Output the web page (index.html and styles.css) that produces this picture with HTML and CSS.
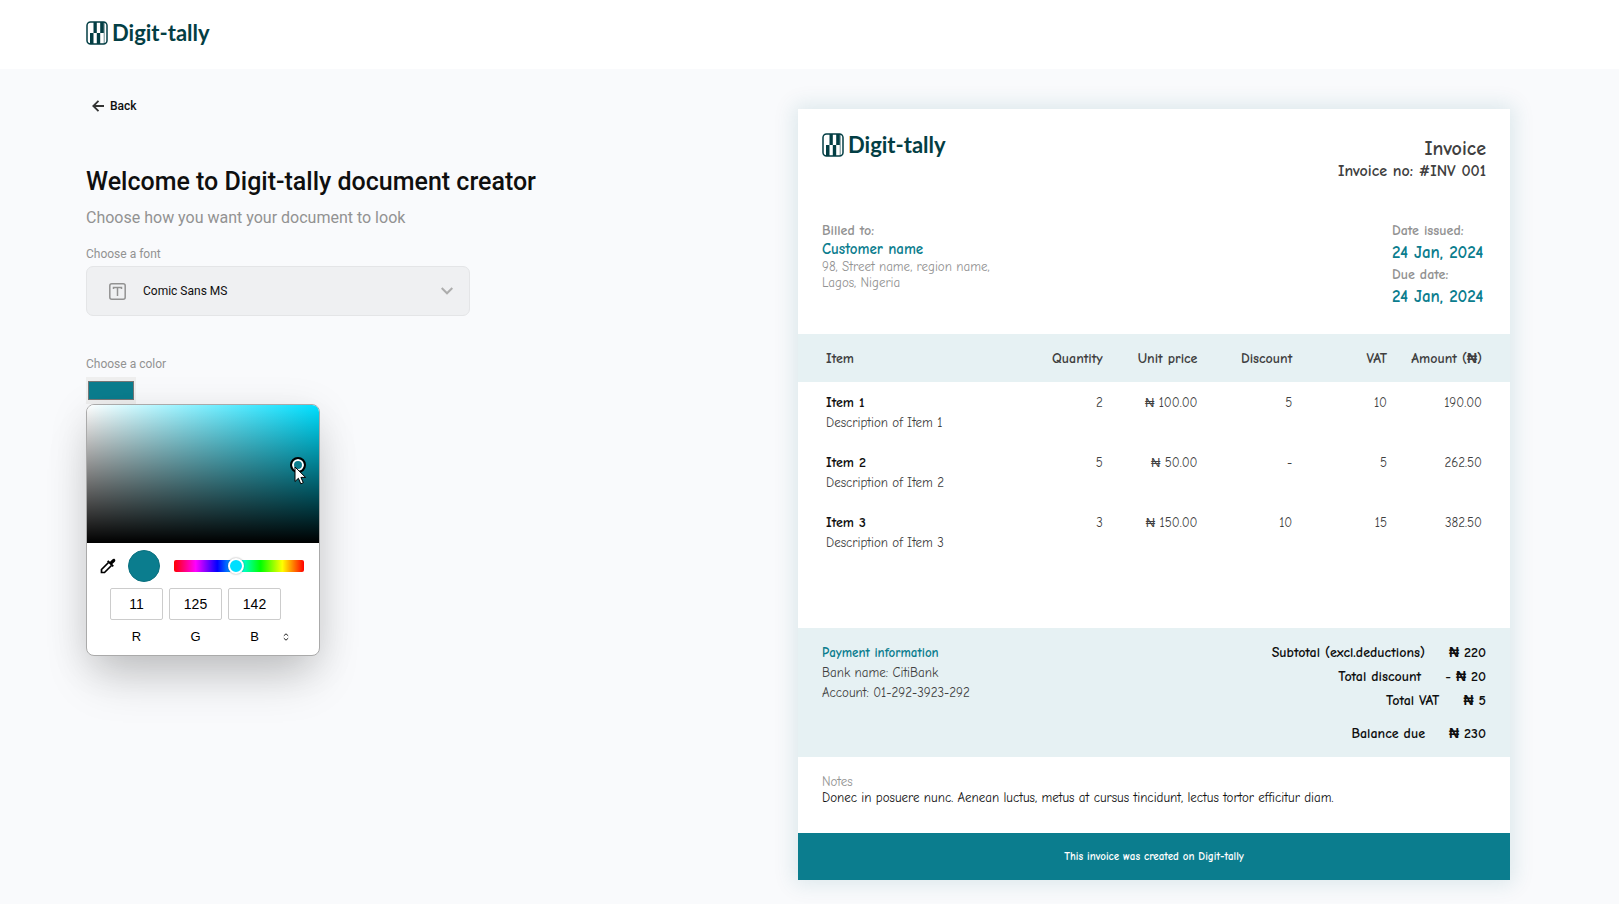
FILE: index.html
```html
<!DOCTYPE html>
<html lang="en">
<head>
<meta charset="utf-8">
<meta name="viewport" content="width=device-width, initial-scale=1">
<title>Digit-tally document creator</title>
<link rel="stylesheet" href="styles.css">
</head>
<body>
<svg width="0" height="0" class="defs" aria-hidden="true">
  <defs>
    <symbol id="logo-mark" viewBox="0 0 22 24">
      <rect x="1" y="1" width="20" height="22" rx="3.5" fill="#fff" stroke="#033e44" stroke-width="1.500"/>
      <path d="M7.500 1h3.300v11H7.500zM14.200 1h3.600v11h-3.600zM4 12h3.500v11H4zM10.800 12h3.400v11h-3.400z" fill="#033e44"/>
      <path d="M18.200 1v22" stroke="#033e44" stroke-width=".6" fill="none"/>
    </symbol>
  </defs>
</svg>

<header class="topbar">
  <a class="logo" href="#"><svg class="logo-mark" aria-hidden="true"><use href="#logo-mark"/></svg><span class="logo-text">Digit-tally</span></a>
</header>

<main class="page">
  <section class="editor">
    <button class="back" type="button">
      <svg width="12" height="12" viewBox="0 0 12 12" fill="none" stroke="#333" stroke-width="1.8" aria-hidden="true"><path d="M12 6H1.500M6.500 .8 1.300 6l5.200 5.200"/></svg>
      Back
    </button>
    <h1 class="title">Welcome to Digit-tally document creator</h1>
    <p class="subtitle">Choose how you want your document to look</p>

    <label class="label" for="font">Choose a font</label>
    <div class="select-box">
      <svg class="type-icon" width="17" height="17" viewBox="0 0 17 17" fill="none" stroke="#929292" stroke-width="1.500" aria-hidden="true"><rect x=".8" y=".8" width="15.400" height="15.400" rx="2"/><path d="M4.500 6V4.500h8V6M8.500 4.500v8.500"/></svg>
      <select class="select" id="font"><option>Comic Sans MS</option></select>
      <svg class="chevron" width="12" height="8" viewBox="0 0 12 8" fill="none" stroke="#adadad" stroke-width="2" aria-hidden="true"><path d="M.7 1 6 6.300 11.300 1"/></svg>
    </div>

    <label class="label" for="color">Choose a color</label>
    <div class="color-field">
      <input class="swatch" id="color" type="color" value="#0b7d8e">
      <button class="apply" type="button" aria-label="Continue"></button>
      <div class="picker">
        <div class="shade">
          <span class="shade-thumb"></span>
          <svg class="cursor" width="13" height="19" viewBox="0 0 13 19" aria-hidden="true"><path d="M1 1v14.500l3.400-3.200 2.400 5.500 2.500-1.100-2.400-5.300h4.700z" fill="#fff" stroke="#000"/></svg>
        </div>
        <div class="picker-row">
          <button class="dropper" type="button" aria-label="Pick a color from the screen">
            <svg width="16" height="16" viewBox="0 0 16 16" aria-hidden="true"><path d="M8.500 4.500 1.500 11.500V14.500h3l7-7" fill="none" stroke="#000" stroke-width="1.700"/><path d="m7 3.500 1.300-1.300 1.700 1.600 2.300-2.400c2-1.700 4 .5 2.500 2.300L12.300 6l1.600 1.700L12.600 9z"/></svg>
          </button>
          <span class="current"></span>
          <input class="hue" type="range" min="0" max="360" value="171" aria-label="Hue">
        </div>
        <div class="channels">
          <label class="channel"><input class="channel-input" type="text" value="11"><span>R</span></label>
          <label class="channel"><input class="channel-input" type="text" value="125"><span>G</span></label>
          <label class="channel"><input class="channel-input" type="text" value="142"><span>B</span></label>
          <button class="mode" type="button" aria-label="Change format">
            <svg width="6" height="8" viewBox="0 0 6 8" fill="none" stroke="#222" aria-hidden="true"><path d="M.8 2.800 3 .8l2.200 2M.8 5.200 3 7.200l2.200-2"/></svg>
          </button>
        </div>
      </div>
    </div>
  </section>

  <article class="invoice">
    <header class="inv-head">
      <div class="logo"><svg class="logo-mark" aria-hidden="true"><use href="#logo-mark"/></svg><span class="logo-text">Digit-tally</span></div>
      <div class="inv-title">
        <h2>Invoice</h2>
        <p>Invoice no: #INV 001</p>
      </div>
    </header>
    <div class="parties">
      <div>
        <p class="muted-bold">Billed to:</p>
        <p class="accent">Customer name</p>
        <p class="address">98, Street name, region name,<br>Lagos, Nigeria</p>
      </div>
      <dl class="dates">
        <dt>Date issued:</dt><dd>24 Jan, 2024</dd>
        <dt>Due date:</dt><dd>24 Jan, 2024</dd>
      </dl>
    </div>
    <table class="items">
      <thead>
        <tr><th class="item-col">Item</th><th>Quantity</th><th>Unit price</th><th>Discount</th><th>VAT</th><th class="amount-col">Amount (₦)</th></tr>
      </thead>
      <tbody>
        <tr><td><b>Item 1</b><br>Description of Item 1</td><td>2</td><td>₦ 100.00</td><td>5</td><td>10</td><td>190.00</td></tr>
        <tr><td><b>Item 2</b><br>Description of Item 2</td><td>5</td><td>₦ 50.00</td><td>-</td><td>5</td><td>262.50</td></tr>
        <tr><td><b>Item 3</b><br>Description of Item 3</td><td>3</td><td>₦ 150.00</td><td>10</td><td>15</td><td>382.50</td></tr>
      </tbody>
    </table>
    <div class="summary">
      <div class="payment">
        <p class="payment-title">Payment information</p>
        <p>Bank name: CitiBank</p>
        <p>Account: 01-292-3923-292</p>
      </div>
      <div class="totals">
        <p><span>Subtotal (excl.deductions)</span><span>₦ 220</span></p>
        <p><span>Total discount</span><span>- ₦ 20</span></p>
        <p><span>Total VAT</span><span>₦ 5</span></p>
        <p class="balance"><span>Balance due</span><span>₦ 230</span></p>
      </div>
    </div>
    <div class="notes">
      <p class="notes-title">Notes</p>
      <p>Donec in posuere nunc. Aenean luctus, metus at cursus tincidunt, lectus tortor efficitur diam.</p>
    </div>
    <footer class="inv-foot">This invoice was created on Digit-tally</footer>
  </article>
</main>
</body>
</html>
```

FILE: styles.css
```css
:root {
  --teal: #0b7d8e;
  --tint: #e6f1f3;
  --ink: #0f0f0f;
  --grey: #929292;
  --dark: #404040;
}
* { box-sizing: border-box; }
body {
  margin: 0;
  background: #f9fafc;
  color: var(--ink);
  font: 12px/20px Roboto, "Liberation Sans", sans-serif;
}
h1, h2, p, dl, dd { margin: 0; }
button { padding: 0; border: 0; background: none; font: inherit; color: inherit; }
.defs { position: absolute; }

.topbar { height: 69px; padding: 21px 86px; background: #fff; }
.logo { display: flex; align-items: center; gap: 4px; height: 24px; color: #033e44; text-decoration: none; }
.logo-mark { width: 22px; height: 24px; }
.logo-text { font: 700 22px/24px Lato, sans-serif; }

.page {
  display: grid;
  grid-template-columns: 1fr 712px;
  padding: 0 109px 24px 86px;
}
.editor { padding-top: 27px; }
.back { display: flex; align-items: center; gap: 6px; margin-left: 6px; font-size: 12px; font-weight: 500; }
.title { margin-top: 50px; font-size: 25px; line-height: 32px; font-weight: 500; }
.subtitle { margin: 8px 0 14px; font-size: 16px; line-height: 24px; color: var(--grey); }
.label { display: block; width: max-content; color: var(--grey); font-size: 12px; line-height: 20px; }
.select-box {
  display: flex;
  align-items: center;
  gap: 17px;
  width: 384px;
  height: 50px;
  margin: 2px 0 38px;
  padding: 0 16px 0 22px;
  border: 1px solid #e4e5e7;
  border-radius: 7px;
  background: #eff0f2;
}
.select { flex: 1; padding: 0; border: 0; appearance: none; background: none; font: 12px/20px Roboto, sans-serif; color: var(--ink); }
.color-field { position: relative; margin-top: 3px; }
.swatch { display: block; width: 50px; height: 27px; padding: 0; border: 0; background: #efefef; }
.apply { position: absolute; left: 0; top: 63px; width: 100px; height: 38px; border-radius: 4px; background: var(--teal); }
.picker {
  position: absolute;
  left: 0;
  top: 27px;
  width: 234px;
  border: 1px solid #aaa;
  border-radius: 8px;
  background: #fff;
  box-shadow: 0 28px 45px -8px rgb(0 0 0 / 18%), 0 8px 40px rgb(0 0 0 / 10%);
}
.shade {
  position: relative;
  height: 138px;
  border-radius: 7px 7px 0 0;
  background: linear-gradient(transparent, #000), linear-gradient(90deg, #fff, #00dfff);
}
.shade-thumb { position: absolute; left: 203px; top: 52px; width: 16px; height: 16px; border: 2px solid #000; border-radius: 50%; background: var(--teal); box-shadow: inset 0 0 0 2px #fff; }
.cursor { position: absolute; left: 207px; top: 61px; }
.picker-row { display: flex; align-items: center; padding: 7px 15px 6px 13px; }
.dropper { display: flex; width: 16px; }
.current { width: 32px; height: 32px; margin: 0 14px 0 12px; border: 1px solid #0a707f; border-radius: 50%; background: var(--teal); }
.hue {
  flex: 1;
  min-width: 0;
  height: 12px;
  margin: 0;
  appearance: none;
  border-radius: 2px;
  background: linear-gradient(90deg, red, #f0f, blue, cyan, lime, yellow, red);
}
.hue::-webkit-slider-thumb { appearance: none; width: 16px; height: 16px; border: 2px solid #fff; border-radius: 50%; background: #00dfff; box-shadow: 0 0 2px rgb(0 0 0 / 40%); }
.channels { display: flex; gap: 6px; padding: 0 16px 8px 23px; }
.channel { display: grid; justify-items: center; gap: 7px; width: 53px; font: 13px/20px "Liberation Sans", Arial, sans-serif; color: #000; }
.channel-input { width: 53px; height: 32px; padding: 0; border: 1px solid #ccc; border-radius: 2px; font: 14px "Liberation Sans", Arial, sans-serif; text-align: center; color: #000; }
.mode { display: flex; align-self: end; align-items: center; height: 20px; margin-left: -4px; }

.invoice {
  margin-top: 40px;
  background: #fff;
  box-shadow: 0 0 20px 4px rgb(11 95 112 / 12%);
  font: 13px/20px "Comic Sans MS", "Comic Neue", "Open Sans", sans-serif;
  color: var(--dark);
}
.inv-head { display: flex; justify-content: space-between; padding: 24px 24px 0; }
.inv-title { text-align: right; font-weight: 700; }
.inv-title h2 { padding-top: 4px; font-size: 20px; line-height: 24px; font-weight: 700; }
.inv-title p { font-size: 16px; line-height: 20px; }
.parties { display: flex; justify-content: space-between; padding: 40px 24px 25px; }
.muted-bold, .dates dt { font-size: 14px; font-weight: 700; line-height: 20px; color: var(--grey); }
.accent { font-size: 15px; font-weight: 700; line-height: 16px; color: var(--teal); }
.address { margin-top: 2px; line-height: 16px; color: var(--grey); }
.dates { min-width: 94px; white-space: nowrap; }
.dates dd { font-size: 17px; font-weight: 700; line-height: 24px; color: var(--teal); }
.items { width: 100%; border-collapse: collapse; table-layout: fixed; }
.items th { height: 48px; padding: 2px 0 0; background: var(--tint); font-size: 14px; font-weight: 700; text-align: right; white-space: nowrap; }
.items td { height: 60px; padding: 11px 0 0; text-align: right; vertical-align: top; white-space: nowrap; }
.items .item-col { width: 210px; }
.items .amount-col { width: 123px; }
.items tr > :first-child { padding-left: 28px; text-align: left; }
.items tr > :last-child { padding-right: 28px; }
.items b { font-size: 14px; line-height: 20px; color: var(--ink); }
.summary { display: flex; justify-content: space-between; margin-top: 66px; padding: 15px 24px 13px; background: var(--tint); }
.payment-title { font-weight: 700; color: var(--teal); }
.totals { font-size: 14px; font-weight: 700; color: var(--ink); }
.totals p { display: flex; justify-content: flex-end; gap: 24px; margin-bottom: 4px; }
.totals .balance { margin: 13px 0 0; }
.notes { padding: 17px 24px 27px; line-height: 16px; color: var(--ink); }
.notes-title { color: var(--grey); }
.inv-foot { padding: 14px; background: var(--teal); color: #fff; font-size: 11px; line-height: 19px; font-weight: 700; text-align: center; }
```
